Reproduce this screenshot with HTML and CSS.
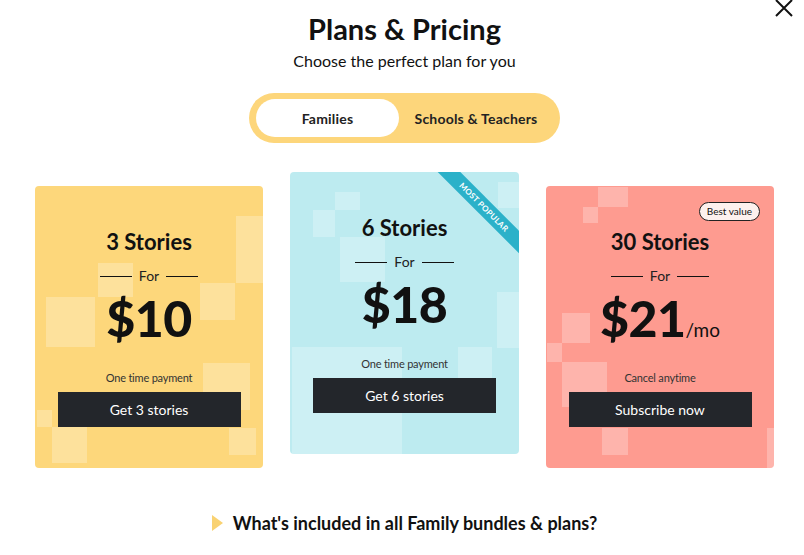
FILE: index.html
```html
<!DOCTYPE html>
<html>
<head>
    <title>Plans &amp; Pricing</title>
    <link rel="stylesheet" href="styles.css">
</head>
<body>
    <button class="close-btn" aria-label="Close">
        <svg width="18" height="18" viewBox="0 0 18 18">
            <path d="M1 1 L17 17 M17 1 L1 17" stroke="#111" stroke-width="2" fill="none"/>
        </svg>
    </button>

    <div class="page">
        <h1>Plans &amp; Pricing</h1>
        <p class="subtitle">Choose the perfect plan for you</p>

        <div class="toggle">
            <div class="toggle-option active">Families</div>
            <div class="toggle-option">Schools &amp; Teachers</div>
        </div>

        <div class="plans">
            <div class="card card-yellow">
                <span class="sq" style="left:201px;top:30px;width:27px;height:67px"></span>
                <span class="sq" style="left:63px;top:77px;width:35px;height:34px"></span>
                <span class="sq" style="left:11px;top:111px;width:49px;height:50px"></span>
                <span class="sq" style="left:165px;top:97px;width:35px;height:37px"></span>
                <span class="sq" style="left:168px;top:177px;width:47px;height:47px"></span>
                <span class="sq" style="left:2px;top:224px;width:15px;height:17px"></span>
                <span class="sq" style="left:17px;top:241px;width:35px;height:36px"></span>
                <span class="sq" style="left:194px;top:242px;width:27px;height:27px"></span>

                <div class="card-title">3 Stories</div>
                <div class="for">For</div>
                <div class="price">$10</div>
                <div class="note">One time payment</div>
                <button class="buy-btn">Get 3 stories</button>
            </div>

            <div class="card card-blue">
                <span class="sq" style="left:45px;top:20px;width:25px;height:18px"></span>
                <span class="sq" style="left:23px;top:38px;width:22px;height:27px"></span>
                <span class="sq" style="left:50px;top:65px;width:45px;height:45px"></span>
                <span class="sq" style="left:208px;top:10px;width:21px;height:26px"></span>
                <span class="sq" style="left:207px;top:120px;width:22px;height:56px"></span>
                <span class="sq" style="left:2px;top:175px;width:110px;height:107px"></span>
                <span class="sq" style="left:168px;top:175px;width:34px;height:31px"></span>

                <div class="ribbon">MOST POPULAR</div>

                <div class="card-title">6 Stories</div>
                <div class="for">For</div>
                <div class="price">$18</div>
                <div class="note">One time payment</div>
                <button class="buy-btn">Get 6 stories</button>
            </div>

            <div class="card card-red">
                <span class="sq" style="left:52px;top:1px;width:30px;height:20px"></span>
                <span class="sq" style="left:37px;top:21px;width:15px;height:16px"></span>
                <span class="sq" style="left:16px;top:127px;width:28px;height:30px"></span>
                <span class="sq" style="left:1px;top:157px;width:15px;height:19px"></span>
                <span class="sq" style="left:16px;top:176px;width:45px;height:45px"></span>
                <span class="sq" style="left:56px;top:242px;width:26px;height:27px"></span>
                <span class="sq" style="left:221px;top:242px;width:8px;height:40px"></span>

                <div class="badge">Best value</div>

                <div class="card-title">30 Stories</div>
                <div class="for">For</div>
                <div class="price">$21<span class="per">/mo</span></div>
                <div class="note">Cancel anytime</div>
                <button class="buy-btn">Subscribe now</button>
            </div>
        </div>

        <div class="included">
            <span class="arrow"></span>
            <span>What's included in all Family bundles &amp; plans?</span>
        </div>
    </div>
</body>
</html>
```

FILE: styles.css
```css
* {
    margin: 0;
    padding: 0;
    box-sizing: border-box;
}

body {
    font-family: 'Lato', 'Liberation Sans', sans-serif;
    background: #fff;
    color: #111;
    width: 804px;
    height: 555px;
    overflow: hidden;
    position: relative;
}

.close-btn {
    position: absolute;
    top: -1px;
    right: 11px;
    border: none;
    background: none;
    cursor: pointer;
    line-height: 0;
}

.page {
    width: 739px;
    margin-left: 35px;
    display: flex;
    flex-direction: column;
    align-items: center;
}

h1 {
    font-size: 29px;
    font-weight: 700;
    line-height: 34px;
    margin-top: 12px;
    color: #111;
}

.subtitle {
    font-size: 16px;
    line-height: 20px;
    margin-top: 5px;
    color: #111;
}

.toggle {
    margin-top: 22px;
    width: 311px;
    height: 50px;
    border-radius: 25px;
    background: #fdd67b;
    display: flex;
    align-items: center;
    padding: 0 7px;
}

.toggle-option {
    font-size: 14px;
    font-weight: 700;
    letter-spacing: 0.2px;
    color: #222;
    height: 38px;
    display: flex;
    align-items: center;
    justify-content: center;
    border-radius: 19px;
    flex: 1;
}

.toggle-option.active {
    background: #fff;
    flex: 0 0 143px;
}

.plans {
    margin-top: 29px;
    width: 100%;
    display: flex;
    gap: 27px;
    align-items: flex-start;
}

.card {
    position: relative;
    overflow: hidden;
    flex: 0 0 228px;
    height: 282px;
    border-radius: 4px;
    padding: 43px 22px 0;
    display: flex;
    flex-direction: column;
    align-items: center;
    margin-top: 14px;
}

.card-yellow {
    background: #fdd77b;
}

.card-blue {
    flex-basis: 229px;
    background: #bdebf0;
    margin-top: 0;
}

.card-red {
    background: #fe9b90;
}

.sq {
    position: absolute;
    background: rgba(255, 255, 255, 0.25);
}

.card > div,
.card > button {
    position: relative;
}

.card-title {
    font-size: 22px;
    font-weight: 700;
    line-height: 26px;
}

.for {
    margin-top: 12px;
    font-size: 14px;
    line-height: 18px;
    display: flex;
    align-items: center;
    gap: 7px;
    color: #222;
}

.for::before,
.for::after {
    content: '';
    width: 32px;
    height: 1px;
    background: #111;
}

.price {
    margin-top: 3px;
    font-size: 50px;
    font-weight: 900;
    line-height: 60px;
    height: 60px;
    letter-spacing: -0.5px;
}

.per {
    font-size: 19px;
    font-weight: 400;
    line-height: 1;
    letter-spacing: 0;
}

.note {
    margin-top: 23px;
    font-size: 11px;
    line-height: 14px;
    letter-spacing: -0.2px;
    color: #333;
}

.buy-btn {
    margin-top: 7px;
    width: 183px;
    height: 35px;
    border: none;
    background: #23262b;
    color: #fff;
    font-family: inherit;
    font-size: 14px;
    cursor: pointer;
}

.ribbon {
    position: absolute !important;
    top: 27px;
    right: -25px;
    width: 120px;
    height: 16px;
    line-height: 16px;
    transform: rotate(45deg);
    background: #2bb1c9;
    color: #fff;
    font-size: 8px;
    font-weight: 700;
    text-align: center;
    letter-spacing: 0.3px;
}

.badge {
    position: absolute !important;
    top: 16px;
    right: 14px;
    height: 19px;
    padding: 0 7px;
    border: 1px solid #222;
    border-radius: 10px;
    background: #fdf1ee;
    font-size: 10px;
    line-height: 17px;
    color: #111;
}

.included {
    margin-top: 44px;
    display: flex;
    align-items: center;
    gap: 10px;
    font-size: 18px;
    font-weight: 700;
    color: #111;
}

.arrow {
    width: 0;
    height: 0;
    border-top: 8px solid transparent;
    border-bottom: 8px solid transparent;
    border-left: 11px solid #f9d272;
}
```
